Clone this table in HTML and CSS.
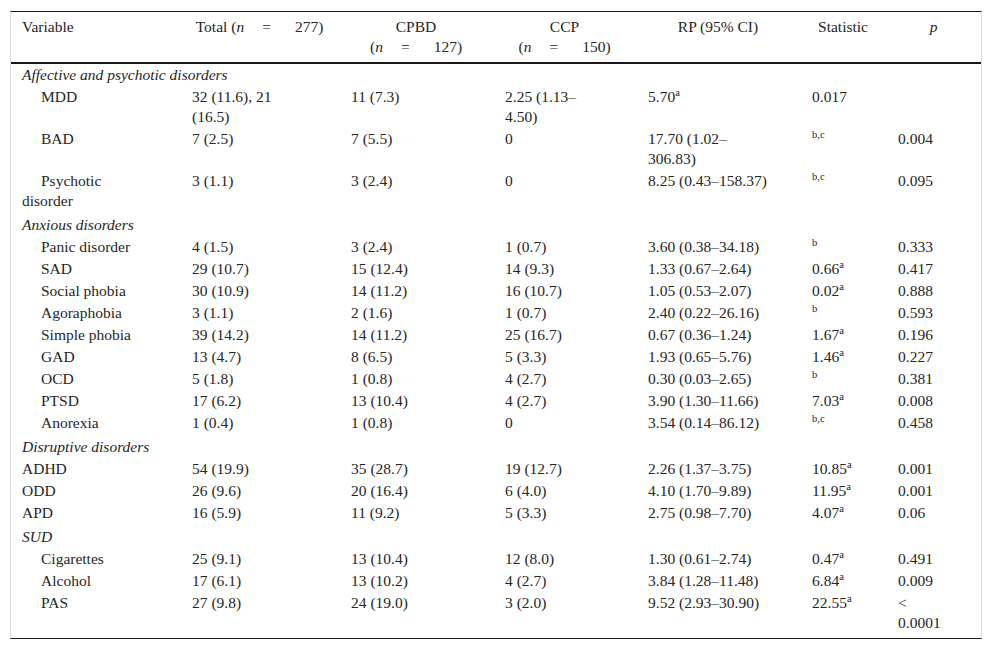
FILE: index.html
```html
<!DOCTYPE html>
<html>
<head>
<meta charset="utf-8">
<link rel="stylesheet" href="styles.css">
</head>
<body>
<div class="frame">
<table class="tbl">
<colgroup>
<col class="c1"><col class="c2"><col class="c3"><col class="c4"><col class="c5"><col class="c6"><col class="c7">
</colgroup>
<thead>
<tr>
<th class="left">Variable</th>
<th>Total (<i>n</i><span class="eq">=</span>277)</th>
<th>CPBD<br>(<i>n</i><span class="eq">=</span>127)</th>
<th>CCP<br>(<i>n</i><span class="eq">=</span>150)</th>
<th>RP (95% CI)</th>
<th>Statistic</th>
<th><i>p</i></th>
</tr>
</thead>
<tbody>
<tr class="cat first"><td colspan="7">Affective and psychotic disorders</td></tr>
<tr><td class="ind">MDD</td><td>32 (11.6), 21 (16.5)</td><td>11 (7.3)</td><td>2.25 (1.13–4.50)</td><td>5.70<sup>a</sup></td><td>0.017</td><td></td></tr>
<tr><td class="ind">BAD</td><td>7 (2.5)</td><td>7 (5.5)</td><td>0</td><td>17.70 (1.02–306.83)</td><td><sup>b,c</sup></td><td>0.004</td></tr>
<tr><td class="ind">Psychotic disorder</td><td>3 (1.1)</td><td>3 (2.4)</td><td>0</td><td>8.25 (0.43–158.37)</td><td><sup>b,c</sup></td><td>0.095</td></tr>
<tr class="cat"><td colspan="7">Anxious disorders</td></tr>
<tr><td class="ind">Panic disorder</td><td>4 (1.5)</td><td>3 (2.4)</td><td>1 (0.7)</td><td>3.60 (0.38–34.18)</td><td><sup>b</sup></td><td>0.333</td></tr>
<tr><td class="ind">SAD</td><td>29 (10.7)</td><td>15 (12.4)</td><td>14 (9.3)</td><td>1.33 (0.67–2.64)</td><td>0.66<sup>a</sup></td><td>0.417</td></tr>
<tr><td class="ind">Social phobia</td><td>30 (10.9)</td><td>14 (11.2)</td><td>16 (10.7)</td><td>1.05 (0.53–2.07)</td><td>0.02<sup>a</sup></td><td>0.888</td></tr>
<tr><td class="ind">Agoraphobia</td><td>3 (1.1)</td><td>2 (1.6)</td><td>1 (0.7)</td><td>2.40 (0.22–26.16)</td><td><sup>b</sup></td><td>0.593</td></tr>
<tr><td class="ind">Simple phobia</td><td>39 (14.2)</td><td>14 (11.2)</td><td>25 (16.7)</td><td>0.67 (0.36–1.24)</td><td>1.67<sup>a</sup></td><td>0.196</td></tr>
<tr><td class="ind">GAD</td><td>13 (4.7)</td><td>8 (6.5)</td><td>5 (3.3)</td><td>1.93 (0.65–5.76)</td><td>1.46<sup>a</sup></td><td>0.227</td></tr>
<tr><td class="ind">OCD</td><td>5 (1.8)</td><td>1 (0.8)</td><td>4 (2.7)</td><td>0.30 (0.03–2.65)</td><td><sup>b</sup></td><td>0.381</td></tr>
<tr><td class="ind">PTSD</td><td>17 (6.2)</td><td>13 (10.4)</td><td>4 (2.7)</td><td>3.90 (1.30–11.66)</td><td>7.03<sup>a</sup></td><td>0.008</td></tr>
<tr><td class="ind">Anorexia</td><td>1 (0.4)</td><td>1 (0.8)</td><td>0</td><td>3.54 (0.14–86.12)</td><td><sup>b,c</sup></td><td>0.458</td></tr>
<tr class="cat"><td colspan="7">Disruptive disorders</td></tr>
<tr><td>ADHD</td><td>54 (19.9)</td><td>35 (28.7)</td><td>19 (12.7)</td><td>2.26 (1.37–3.75)</td><td>10.85<sup>a</sup></td><td>0.001</td></tr>
<tr><td>ODD</td><td>26 (9.6)</td><td>20 (16.4)</td><td>6 (4.0)</td><td>4.10 (1.70–9.89)</td><td>11.95<sup>a</sup></td><td>0.001</td></tr>
<tr><td>APD</td><td>16 (5.9)</td><td>11 (9.2)</td><td>5 (3.3)</td><td>2.75 (0.98–7.70)</td><td>4.07<sup>a</sup></td><td>0.06</td></tr>
<tr class="cat"><td colspan="7">SUD</td></tr>
<tr><td class="ind">Cigarettes</td><td>25 (9.1)</td><td>13 (10.4)</td><td>12 (8.0)</td><td>1.30 (0.61–2.74)</td><td>0.47<sup>a</sup></td><td>0.491</td></tr>
<tr><td class="ind">Alcohol</td><td>17 (6.1)</td><td>13 (10.2)</td><td>4 (2.7)</td><td>3.84 (1.28–11.48)</td><td>6.84<sup>a</sup></td><td>0.009</td></tr>
<tr><td class="ind">PAS</td><td>27 (9.8)</td><td>24 (19.0)</td><td>3 (2.0)</td><td>9.52 (2.93–30.90)</td><td>22.55<sup>a</sup></td><td>&lt; 0.0001</td></tr>
</tbody>
</table>
</div>
</body>
</html>
```

FILE: styles.css
```css
html, body {
  margin: 0;
  padding: 0;
  background: #ffffff;
}
body {
  padding: 11px 10px 0 10px;
  font-family: "Liberation Serif", "Times New Roman", serif;
  font-size: 15.5px;
  color: #262626;
}
.frame {
  width: 970px;
  border-top: 1px solid #1a1a1a;
  border-bottom: 1px solid #1a1a1a;
  border-left: 1px solid #dcdcdc;
  border-right: 1px solid #dcdcdc;
  padding-bottom: 4px;
}
.tbl {
  width: 970px;
  border-collapse: collapse;
  table-layout: fixed;
  line-height: 20px;
}
.c1 { width: 169px; }
.c2 { width: 159px; }
.c3 { width: 154px; }
.c4 { width: 143px; }
.c5 { width: 164px; }
.c6 { width: 86px; }
.c7 { width: 95px; }
.tbl th {
  font-weight: normal;
  text-align: center;
  vertical-align: top;
  padding: 5px 12px 5px 12px;
  border-bottom: 2px solid #1a1a1a;
}
.tbl th.left {
  text-align: left;
  padding-left: 11px;
}
.eq {
  margin: 0 24px 0 18px;
}
.tbl td {
  text-align: left;
  vertical-align: top;
  padding: 1px 30px 1px 12px;
}
.tbl td:first-child {
  padding-left: 11px;
}
.tbl td.ind {
  text-indent: 19px;
}
.cat td {
  font-style: italic;
  padding-top: 3px;
}
.cat.first td {
  padding-top: 1px;
}
sup {
  font-size: 10.5px;
  line-height: 0;
  vertical-align: 6px;
}
```
